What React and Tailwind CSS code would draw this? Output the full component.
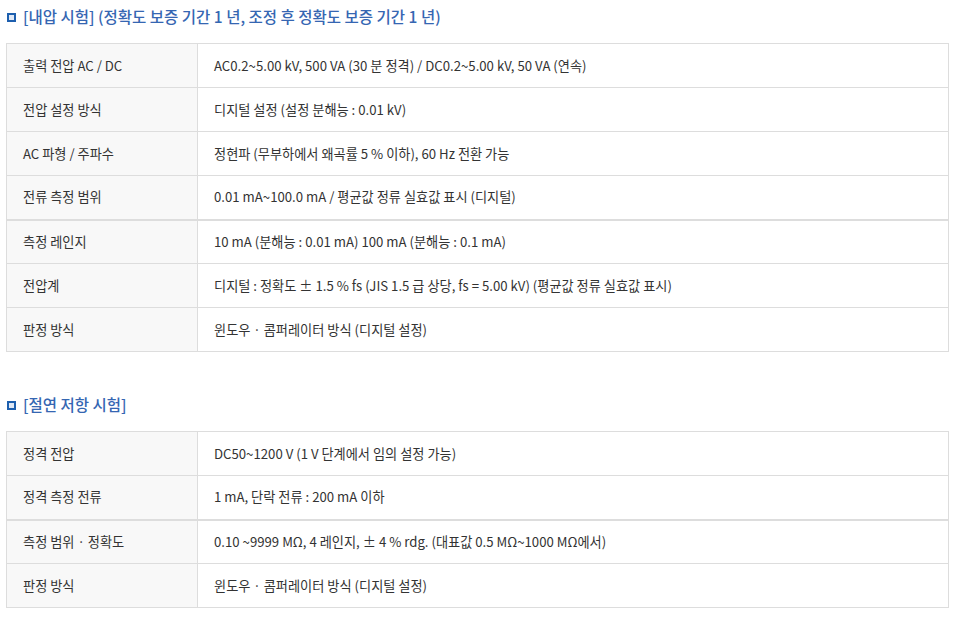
const sections = [
  {
    title: '[내압 시험] (정확도 보증 기간 1 년, 조정 후 정확도 보증 기간 1 년)',
    rows: [
      ['출력 전압 AC / DC', 'AC0.2~5.00 kV, 500 VA (30 분 정격) / DC0.2~5.00 kV, 50 VA (연속)'],
      ['전압 설정 방식', '디지털 설정 (설정 분해능 : 0.01 kV)'],
      ['AC 파형 / 주파수', '정현파 (무부하에서 왜곡률 5 % 이하), 60 Hz 전환 가능'],
      ['전류 측정 범위', '0.01 mA~100.0 mA / 평균값 정류 실효값 표시 (디지털)', true],
      ['측정 레인지', '10 mA (분해능 : 0.01 mA) 100 mA (분해능 : 0.1 mA)'],
      ['전압계', '디지털 : 정확도 ± 1.5 % fs (JIS 1.5 급 상당, fs = 5.00 kV) (평균값 정류 실효값 표시)'],
      ['판정 방식', '윈도우 · 콤퍼레이터 방식 (디지털 설정)'],
    ],
  },
  {
    title: '[절연 저항 시험]',
    rows: [
      ['정격 전압', 'DC50~1200 V (1 V 단계에서 임의 설정 가능)'],
      ['정격 측정 전류', '1 mA, 단락 전류 : 200 mA 이하', true],
      ['측정 범위 · 정확도', '0.10 ~9999 MΩ, 4 레인지, ± 4 % rdg. (대표값 0.5 MΩ~1000 MΩ에서)'],
      ['판정 방식', '윈도우 · 콤퍼레이터 방식 (디지털 설정)'],
    ],
  },
];

const SpecTable = ({ rows }) => (
  <table className="w-full border-collapse border-t border-[#dddddd] text-[13.2px] text-[#333333]">
    <tbody>
      {rows.map(([label, value, divider], i) => (
        <tr key={i} className={divider ? 'border-b-2 border-[#dddddd]' : 'border-b border-[#dddddd]'}>
          <td className="h-[44px] w-[191px] border-l border-r border-[#dddddd] bg-[#f8f8f8] pl-4 align-middle">
            {label}
          </td>
          <td className="h-[44px] border-r border-[#dddddd] bg-white pl-4 align-middle">{value}</td>
        </tr>
      ))}
    </tbody>
  </table>
);

const App = () => {
  return (
    <div
      className="w-[953px] bg-white pl-[6px] pr-[4px]"
      style={{ fontFamily: '"Noto Sans CJK KR", "Noto Sans", sans-serif' }}
    >
      {sections.map((section, i) => (
        <div key={i} className={i > 0 ? 'mt-[36px]' : ''}>
          <div className="mb-[9px] flex h-[34px] items-center gap-[7px]">
            <span className="ml-[1px] h-[9px] w-[9px] border-2 border-[#1d5fae] bg-[#dfe8f5]" />
            <h3 className="text-[15.5px] font-medium text-[#3566b2]">{section.title}</h3>
          </div>
          <SpecTable rows={section.rows} />
        </div>
      ))}
    </div>
  );
};

export default App;
